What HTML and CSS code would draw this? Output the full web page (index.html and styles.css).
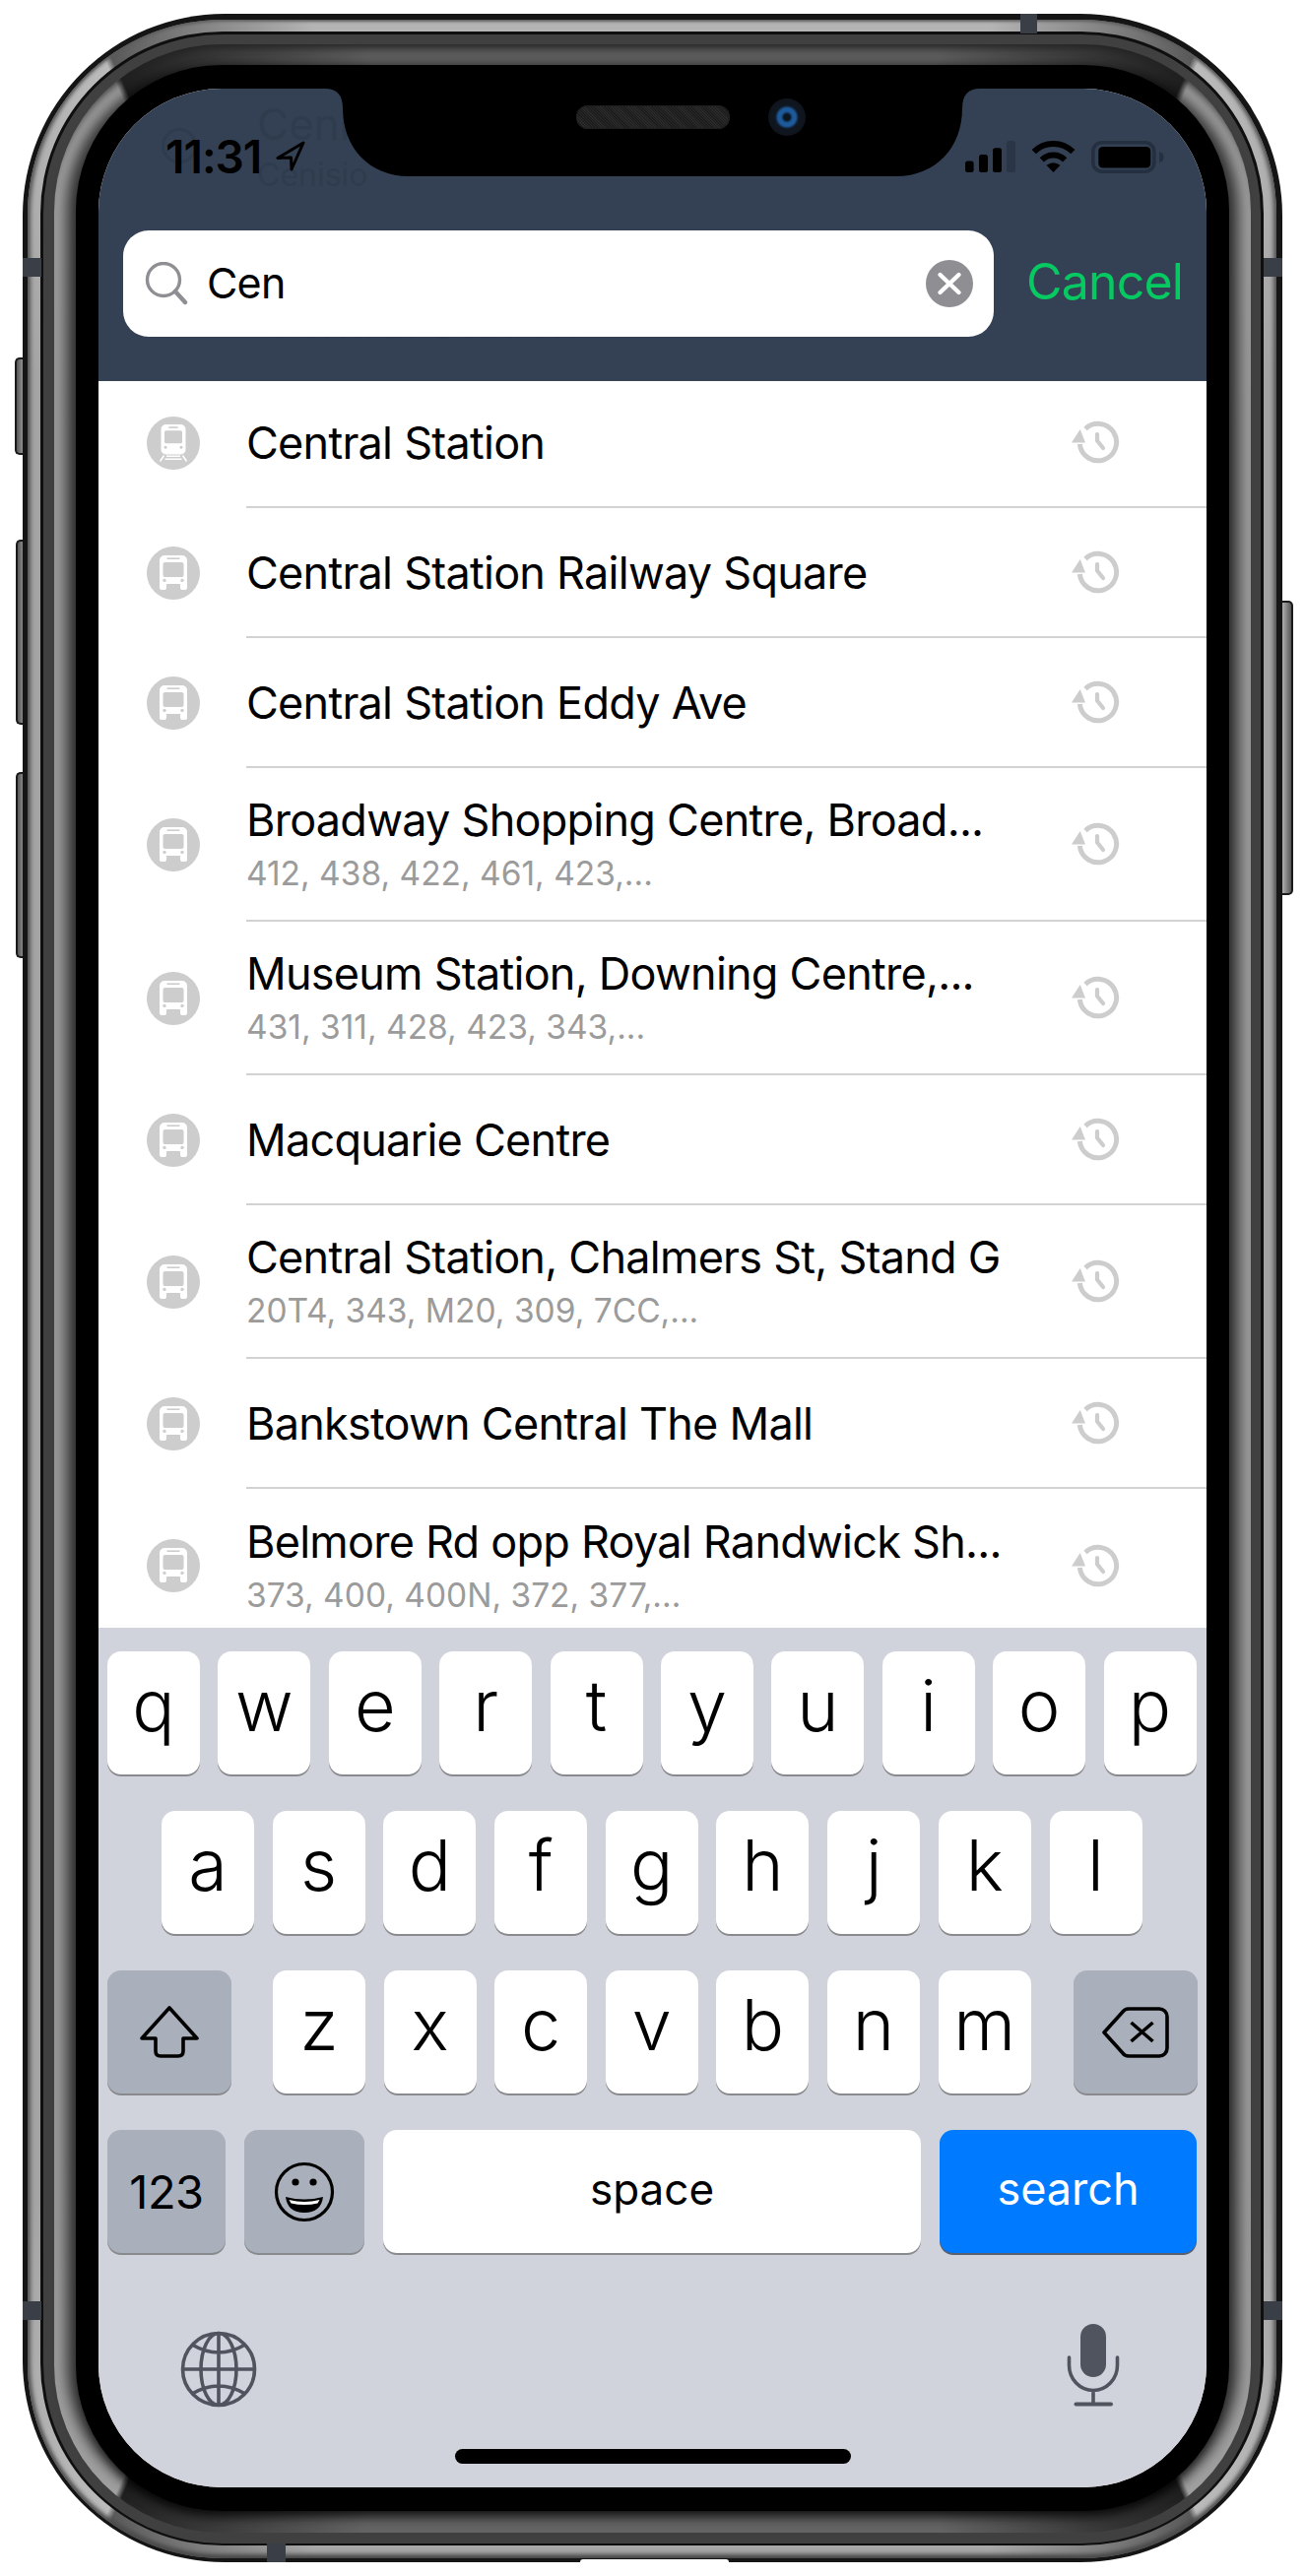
FILE: index.html
```html
<!DOCTYPE html>
<html>
    <head>
        <title>Stop search</title>
        <meta name="viewport" content="width=device-width, initial-scale=1">
        <link rel="stylesheet" href="styles.css">
    </head>
    <body>
        <svg class="defs" width="0" height="0">
            <symbol id="bus" viewBox="-27 -27 54 54">
                <circle r="27" fill="#cdcdcd"/>
                <path fill="#fff" d="M-9-18H9a5 5 0 0 1 5 5V15a2 2 0 0 1-2 2H9a2 2 0 0 1-2-2V11H-7V15a2 2 0 0 1-2 2H-12a2 2 0 0 1-2-2V-13a5 5 0 0 1 5-5Z"/>
                <rect x="-10.5" y="-11" width="21" height="15" rx="2" fill="#cdcdcd"/>
                <rect x="-6.5" y="-15.6" width="13" height="1.6" fill="#cdcdcd"/>
                <circle cx="-9" cy="7.4" r="1.7" fill="#cdcdcd"/>
                <circle cx="9" cy="7.4" r="1.7" fill="#cdcdcd"/>
            </symbol>
            <symbol id="train" viewBox="-27 -27 54 54">
                <circle r="27" fill="#cdcdcd"/>
                <rect x="-12.5" y="-19" width="25" height="30.5" rx="5" fill="#fff"/>
                <rect x="-9" y="-12.7" width="18" height="13" rx="1.5" fill="#cdcdcd"/>
                <rect x="-4.7" y="-16.7" width="9.4" height="1.6" fill="#cdcdcd"/>
                <circle cx="-8" cy="4.3" r="1.5" fill="#cdcdcd"/>
                <circle cx="8" cy="4.3" r="1.5" fill="#cdcdcd"/>
                <path fill="none" stroke="#fff" stroke-width="1.5" d="M-9.5 12.5L-13.5 18.5M9.5 12.5L13.5 18.5M-7 13.2H7M-8.5 16.2H8.5"/>
            </symbol>
            <symbol id="recent" viewBox="0 0 50 50">
                <path fill="none" stroke="#cdcdcd" stroke-width="5" d="M14 11.5A18.7 18.7 0 1 1 8.3 27"/>
                <path fill="#cdcdcd" d="M0 25.5L14 25.5L8.7 12Z"/>
                <path fill="none" stroke="#cdcdcd" stroke-width="4.2" stroke-linecap="round" stroke-linejoin="round" d="M26 17V23.5L32 31"/>
            </symbol>
        </svg>

        <div class="phone">
            <i class="btn btn-mute"></i>
            <i class="btn btn-up"></i>
            <i class="btn btn-down"></i>
            <i class="btn btn-side"></i>
            <div class="rim">
                <div class="bevel">
                    <div class="face">
                        <div class="glass">
                            <div class="screen">
                                <header class="nav">
                                    <span class="ghost ghost-title">Ceni</span>
                                    <span class="ghost ghost-sub">Cenisio</span>
                                    <span class="ghost ghost-under">Central Station</span>
                                    <i class="ghost ghost-dot"></i>

                                    <div class="status">
                                        <div class="clock">
                                            <span>11:31</span>
                                            <svg width="30" height="31" viewBox="0 0 30 31"><path fill="none" stroke="#000" stroke-width="3" stroke-linejoin="round" d="M28 2L2 17.5L15.5 17L16 29Z"/></svg>
                                        </div>
                                        <div class="signal">
                                            <svg width="52" height="32" viewBox="0 0 52 32">
                                                <rect x="0" y="20.6" width="8.6" height="11.4" rx="2.5"/>
                                                <rect x="14" y="14" width="9" height="18" rx="2.5"/>
                                                <rect x="28" y="7.3" width="9" height="24.7" rx="2.5"/>
                                                <rect x="42" y="0" width="9" height="32" rx="2.5" fill="#2a3647"/>
                                            </svg>
                                            <svg width="46" height="32" viewBox="0 0 46 32">
                                                <path fill="none" stroke="#000" stroke-width="6" d="M2.7 11.2A28 28 0 0 1 42.3 11.2M10.8 19.3A16.5 16.5 0 0 1 34.2 19.3"/>
                                                <path d="M22.5 32L15.5 24.8Q22.5 19.8 29.5 24.8Z"/>
                                            </svg>
                                            <svg width="74" height="33" viewBox="0 0 74 33">
                                                <rect x="1.8" y="1.8" width="62" height="29.4" rx="9" fill="none" stroke="#24303f" stroke-width="3.6"/>
                                                <rect x="7.3" y="6" width="53" height="21.5" rx="4.5"/>
                                                <path fill="#24303f" d="M69 11Q73.5 12 73.5 16.5Q73.5 21 69 22Z"/>
                                            </svg>
                                        </div>
                                    </div>

                                    <div class="search-bar">
                                        <div class="search">
                                            <svg width="44" height="44" viewBox="0 0 44 44"><circle cx="19" cy="18" r="16.5" fill="none" stroke="#8e8e93" stroke-width="3.4"/><path stroke="#8e8e93" stroke-width="4.4" stroke-linecap="round" d="M31 30L41 41"/></svg>
                                            <span class="query">Cen</span>
                                            <svg width="48" height="48" viewBox="0 0 48 48"><circle cx="24" cy="24" r="24" fill="#8e8e93"/><path stroke="#fff" stroke-width="4.4" stroke-linecap="round" d="M14.5 15L33.5 33M33.5 15L14.5 33"/></svg>
                                        </div>
                                        <span class="cancel">Cancel</span>
                                    </div>
                                </header>

                                <svg class="notch" width="665" height="89" viewBox="0 0 665 89"><path d="M0 0Q18 0 18 20C18 60 45 89 85 89H580C620 89 647 60 647 20Q647 0 665 0Z"/></svg>
                                <i class="speaker"></i>
                                <i class="camera"></i>

                                <ul class="results">
                                    <li class="row row-first">
                                        <svg class="mode" width="54" height="54"><use href="#train"/></svg>
                                        <div class="row-body">
                                            <div class="row-text"><div class="title">Central Station</div></div>
                                            <svg class="recent" width="50" height="50"><use href="#recent"/></svg>
                                        </div>
                                    </li>
                                    <li class="row">
                                        <svg class="mode" width="54" height="54"><use href="#bus"/></svg>
                                        <div class="row-body">
                                            <div class="row-text"><div class="title">Central Station Railway Square</div></div>
                                            <svg class="recent" width="50" height="50"><use href="#recent"/></svg>
                                        </div>
                                    </li>
                                    <li class="row">
                                        <svg class="mode" width="54" height="54"><use href="#bus"/></svg>
                                        <div class="row-body">
                                            <div class="row-text"><div class="title">Central Station Eddy Ave</div></div>
                                            <svg class="recent" width="50" height="50"><use href="#recent"/></svg>
                                        </div>
                                    </li>
                                    <li class="row row-tall">
                                        <svg class="mode" width="54" height="54"><use href="#bus"/></svg>
                                        <div class="row-body">
                                            <div class="row-text">
                                                <div class="title">Broadway Shopping Centre, Broad...</div>
                                                <div class="routes">412, 438, 422, 461, 423,...</div>
                                            </div>
                                            <svg class="recent" width="50" height="50"><use href="#recent"/></svg>
                                        </div>
                                    </li>
                                    <li class="row row-tall">
                                        <svg class="mode" width="54" height="54"><use href="#bus"/></svg>
                                        <div class="row-body">
                                            <div class="row-text">
                                                <div class="title">Museum Station, Downing Centre,...</div>
                                                <div class="routes">431, 311, 428, 423, 343,...</div>
                                            </div>
                                            <svg class="recent" width="50" height="50"><use href="#recent"/></svg>
                                        </div>
                                    </li>
                                    <li class="row">
                                        <svg class="mode" width="54" height="54"><use href="#bus"/></svg>
                                        <div class="row-body">
                                            <div class="row-text"><div class="title">Macquarie Centre</div></div>
                                            <svg class="recent" width="50" height="50"><use href="#recent"/></svg>
                                        </div>
                                    </li>
                                    <li class="row row-tall">
                                        <svg class="mode" width="54" height="54"><use href="#bus"/></svg>
                                        <div class="row-body">
                                            <div class="row-text">
                                                <div class="title">Central Station, Chalmers St, Stand G</div>
                                                <div class="routes">20T4, 343, M20, 309, 7CC,...</div>
                                            </div>
                                            <svg class="recent" width="50" height="50"><use href="#recent"/></svg>
                                        </div>
                                    </li>
                                    <li class="row">
                                        <svg class="mode" width="54" height="54"><use href="#bus"/></svg>
                                        <div class="row-body">
                                            <div class="row-text"><div class="title">Bankstown Central The Mall</div></div>
                                            <svg class="recent" width="50" height="50"><use href="#recent"/></svg>
                                        </div>
                                    </li>
                                    <li class="row row-tall">
                                        <svg class="mode" width="54" height="54"><use href="#bus"/></svg>
                                        <div class="row-body">
                                            <div class="row-text">
                                                <div class="title">Belmore Rd opp Royal Randwick Sh...</div>
                                                <div class="routes">373, 400, 400N, 372, 377,...</div>
                                            </div>
                                            <svg class="recent" width="50" height="50"><use href="#recent"/></svg>
                                        </div>
                                    </li>
                                </ul>

                                <div class="keyboard">
                                    <div class="keys">
                                        <div class="key">q</div><div class="key">w</div><div class="key">e</div><div class="key">r</div><div class="key">t</div><div class="key">y</div><div class="key">u</div><div class="key">i</div><div class="key">o</div><div class="key">p</div>
                                    </div>
                                    <div class="keys keys-home">
                                        <div class="key">a</div><div class="key">s</div><div class="key">d</div><div class="key">f</div><div class="key">g</div><div class="key">h</div><div class="key">j</div><div class="key">k</div><div class="key">l</div>
                                    </div>
                                    <div class="keys keys-lower">
                                        <div class="key key-fn key-shift">
                                            <svg width="60" height="54" viewBox="0 0 60 54"><path fill="none" stroke="#000" stroke-width="3.6" stroke-linejoin="round" d="M30 2L58 33H44V46Q44 51 39 51H21Q16 51 16 46V33H2Z"/></svg>
                                        </div>
                                        <div class="key">z</div><div class="key">x</div><div class="key">c</div><div class="key">v</div><div class="key">b</div><div class="key">n</div><div class="key">m</div>
                                        <div class="key key-fn key-shift">
                                            <svg width="68" height="52" viewBox="0 0 68 52"><path fill="none" stroke="#000" stroke-width="3.6" stroke-linejoin="round" d="M2 26L21 5Q23 2 27 2H58A8 8 0 0 1 66 10V42A8 8 0 0 1 58 50H27Q23 50 21 47Z"/><path stroke="#000" stroke-width="3.6" d="M29.5 16L51.5 35M51.5 16L29.5 35"/></svg>
                                        </div>
                                    </div>
                                    <div class="keys keys-bottom">
                                        <div class="key key-fn key-num">123</div>
                                        <div class="key key-fn key-emoji">
                                            <svg width="62" height="62" viewBox="-31 -31 62 62">
                                                <circle r="28.5" fill="none" stroke="#000" stroke-width="3.2"/>
                                                <circle cx="-9" cy="-10" r="3.6"/>
                                                <circle cx="9" cy="-10" r="3.6"/>
                                                <path d="M-19 5Q0 10 19 5Q17 21 0 21Q-17 21 -19 5Z"/>
                                                <path fill="#fff" d="M-15.5 8Q0 12 15.5 8L13.5 11.5Q0 14.5 -13.5 11.5Z"/>
                                            </svg>
                                        </div>
                                        <div class="key key-space">space</div>
                                        <div class="key key-go">search</div>
                                    </div>
                                    <div class="kb-foot">
                                        <svg class="globe" width="84" height="84" viewBox="0 0 84 84">
                                            <g fill="none" stroke="#50545e" stroke-width="3.6">
                                                <circle cx="42" cy="42" r="36.5"/>
                                                <ellipse cx="42" cy="42" rx="18" ry="36.5"/>
                                                <path d="M42 5V79M5 42H79M15 17Q42 33 69 17M15 67Q42 51 69 67"/>
                                            </g>
                                        </svg>
                                        <svg class="mic" width="56" height="86" viewBox="0 0 56 86">
                                            <rect x="15" y="0" width="26" height="54" rx="13" fill="#50545e"/>
                                            <path fill="none" stroke="#50545e" stroke-width="3.6" stroke-linecap="round" d="M3.5 34V42A24.5 25.5 0 0 0 52.5 42V34M28 68V81"/>
                                            <path stroke="#50545e" stroke-width="4" stroke-linecap="round" d="M10.5 81.5H46"/>
                                        </svg>
                                    </div>
                                    <div class="home-bar"></div>
                                </div>
                            </div>
                        </div>
                    </div>
                </div>
            </div>
            <i class="band band-top"></i>
            <i class="band band-left1"></i>
            <i class="band band-right1"></i>
            <i class="band band-left2"></i>
            <i class="band band-right2"></i>
            <i class="band band-bottom"></i>
            <i class="foot-cut"></i>
        </div>
    </body>
</html>
```

FILE: styles.css
```css
* { box-sizing: content-box; }
html { background: #fff; }
html, body { margin: 0; padding: 0; }
body { width: 1325px; height: 2616px; overflow: hidden; font-family: Inter, "Liberation Sans", sans-serif; color: #000; }
.defs { position: absolute; }

/* device frame, ring by ring from the outside in */
.phone { position: relative; width: 1268px; height: 2578px; margin: 14px 0 0 23px; padding: 6px 6px 4px 5px; border-radius: 205px; background: #151515; }
.rim {
    padding: 12px 13px 13px 13px; border-radius: 198px;
    background: conic-gradient(#b4b4b4 0 15deg, #5a5a5a 23.7deg, #bbb 24deg, #a4a4a4 34deg 146deg, #bbb 156deg, #5a5a5a 156.3deg, #a8a8a8 165deg 195deg, #5a5a5a 203.7deg, #bbb 204deg, #a4a4a4 214deg 326deg, #bbb 336deg, #5a5a5a 336.3deg, #b4b4b4 345deg);
    box-shadow: inset 5px 0 4px -2px #555, inset -5px 0 4px -2px #555, inset 0 4px 3px -2px #666, inset 0 -6px 5px -2px #444;
}
.bevel { padding: 10px 10px 11px 11px; border-radius: 185px; border: 3px solid #0f0f0f; border-bottom-width: 2px; background: #404040; }
.face {
    padding: 21px 22px 22px 22px; border-radius: 170px;
    background: conic-gradient(#606060 0 13deg, #202020 23.7deg, #a0a0a0 24deg, #9a9a9a 34deg 146deg, #a0a0a0 156deg, #202020 156.3deg, #646464 167deg 193deg, #202020 203.7deg, #a0a0a0 204deg, #9a9a9a 214deg 326deg, #a0a0a0 336deg, #202020 336.3deg, #606060 347deg);
    box-shadow: inset 0 12px 10px -8px #222;
}
.glass { padding: 24px 23px; border-radius: 148px; background: #000; box-shadow: -14px 0 14px -5px rgba(0, 0, 0, .7), 14px 0 14px -5px rgba(0, 0, 0, .7), 0 14px 12px -8px rgba(0, 0, 0, .7); }
.screen { position: relative; display: flex; flex-direction: column; width: 1125px; height: 2436px; border-radius: 125px; overflow: hidden; background: #fff; }

.btn { position: absolute; z-index: -1; width: 14px; border: 2px solid #1a1a1a; border-right: 0; border-radius: 5px 0 0 5px; background: linear-gradient(90deg, #555, #aaa 60%, #8a8a8a); }
.btn-mute { left: -8px; top: 349px; height: 95px; }
.btn-up { left: -7px; top: 534px; height: 184px; }
.btn-down { left: -7px; top: 770px; height: 185px; }
.btn-side { left: 1274px; top: 596px; height: 295px; border: 2px solid #1a1a1a; border-left: 0; border-radius: 0 5px 5px 0; background: linear-gradient(270deg, #555, #aaa 60%, #8a8a8a); }

.band { position: absolute; background: #3a3f47; }
.band-top { left: 1013px; top: 0; width: 17px; height: 20px; }
.band-left1 { left: 0; top: 248px; width: 19px; height: 19px; }
.band-right1 { left: 1260px; top: 248px; width: 19px; height: 19px; }
.band-left2 { left: 0; top: 2323px; width: 19px; height: 19px; }
.band-right2 { left: 1260px; top: 2323px; width: 19px; height: 19px; }
.band-bottom { left: 248px; top: 2569px; width: 19px; height: 19px; }
.foot-cut { position: absolute; left: 566px; top: 2585px; width: 151px; height: 3px; border-radius: 5px 5px 0 0; background: #fff; }

/* top bar */
.nav { position: relative; flex: none; height: 297px; background: #344154; }
.ghost { position: absolute; color: #2f3c4e; white-space: nowrap; }
.ghost-title { left: 161px; top: 8px; font-size: 44px; line-height: 56px; }
.ghost-sub { left: 161px; top: 68px; font-size: 32px; line-height: 40px; }
.ghost-under { left: 166px; top: 208px; font-size: 46px; line-height: 56px; color: #303d50; }
.ghost-dot { left: 64px; top: 40px; width: 30px; height: 30px; border: 3px solid #2f3c4e; border-radius: 50%; }

.status { position: relative; display: flex; justify-content: space-between; height: 92px; padding: 52px 43px 0 68px; }
.clock { display: flex; align-items: flex-start; gap: 15px; font-size: 46px; font-weight: 600; line-height: 34px; letter-spacing: -1px; }
.clock svg { margin-top: 1px; }
.signal { display: flex; align-items: flex-start; gap: 15px; height: 33px; margin-top: 1px; }

.search-bar { position: relative; display: flex; align-items: center; padding-left: 25px; }
.search { display: flex; align-items: center; width: 841px; height: 108px; padding: 0 21px 0 22px; border-radius: 26px; background: #fff; }
.query { flex: 1; margin: -2px 0 0 19px; font-size: 43px; letter-spacing: -0.8px; }
.cancel { margin: -4px 0 0 33px; font-size: 50px; color: #06c962; letter-spacing: -0.8px; }

.notch { position: absolute; left: 230px; top: 0; }
.speaker { position: absolute; left: 485px; top: 17px; width: 156px; height: 24px; border-radius: 12px; background: repeating-linear-gradient(45deg, #1c1c1c 0 1px, #2a2a2a 1px 2px); box-shadow: inset 0 0 0 1px #1e1e1e; }
.camera { position: absolute; left: 680px; top: 10px; width: 38px; height: 38px; border-radius: 50%; background: radial-gradient(circle, #0a1522 0 3px, #1d5a9b 6px 9px, #0f1722 12px, #10141b 19px); }

/* results */
.results { flex: none; height: 1266px; margin: 0; padding: 0; list-style: none; overflow: hidden; background: #fff; }
.row { display: flex; align-items: center; height: 132px; padding-left: 49px; }
.row-first { height: 129px; }
.row-first .mode { margin-bottom: 4px; }
.row-first .recent { margin-bottom: 4px; }
.row-first .row-text { margin-bottom: 4px; }
.row-tall { height: 156px; }
.mode { flex: none; margin-right: 47px; }
.row-body { display: flex; flex: 1; align-items: center; height: 100%; box-sizing: border-box; border-bottom: 2px solid #d2d2d2; }
.row:last-child .row-body { border-bottom: 0; }
.row-text { flex: 1; min-width: 0; }
.row:not(.row-tall) .title { margin-top: 2px; }
.title { font-size: 45px; line-height: 52px; letter-spacing: -0.75px; white-space: nowrap; }
.routes { margin-top: 8px; font-size: 33.5px; line-height: 40px; color: #9b9b9b; white-space: nowrap; }
.recent { flex: none; margin-right: 87px; }

/* keyboard */
.keyboard { flex: 1; padding-top: 24px; background: #d0d3db; }
.keys { display: flex; gap: 18.4px; height: 125px; margin-bottom: 37px; padding-left: 9px; }
.keys-home { gap: 18.7px; padding-left: 64px; }
.keys-lower { gap: 18.6px; }
.keys-bottom { gap: 19px; margin-bottom: 0; }
.key { display: flex; flex: none; align-items: center; justify-content: center; box-sizing: border-box; width: 94px; height: 125px; padding-bottom: 16px; border-radius: 14px; background: #fff; box-shadow: 0 2px 0 #898a8e; font-size: 72px; font-weight: 300; }
.key-fn { background: #a9b0bb; padding-bottom: 0; }
.key-shift { width: 126px; }
.keys-lower .key-shift:first-child { margin-right: 23.4px; }
.keys-lower .key-shift:last-child { margin-left: 24.4px; }
.key-num { width: 120px; font-size: 47px; font-weight: 400; letter-spacing: -0.5px; }
.key-emoji { width: 122px; }
.key-space { width: 546px; padding-bottom: 6px; font-size: 44px; font-weight: 400; }
.key-go { width: 261px; padding-bottom: 6px; background: #007aff; color: #fff; font-size: 45px; font-weight: 400; box-shadow: 0 2px 0 #59616e; }
.kb-foot { display: flex; justify-content: space-between; height: 84px; margin-top: 72px; padding: 0 87px 0 80px; }
.globe { margin-top: 4px; }
.home-bar { width: 402px; height: 15px; margin: 43px auto 0; border-radius: 8px; background: #000; }
```
